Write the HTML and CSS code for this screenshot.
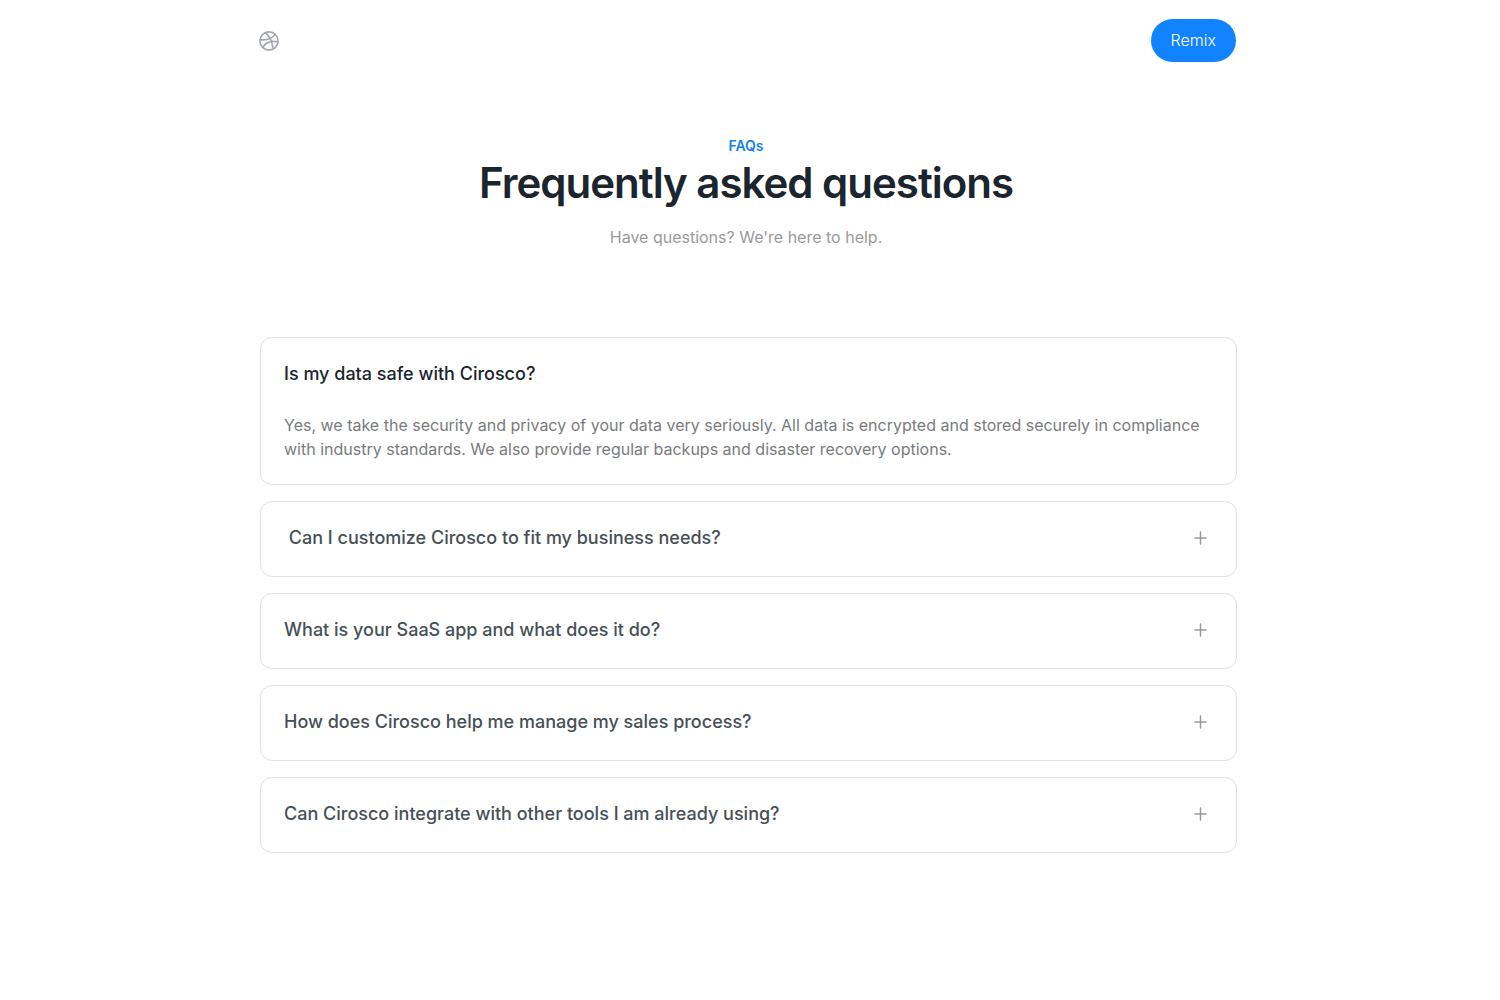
FILE: index.html
```html
<!DOCTYPE html>
<html lang="en">
<head>
<meta charset="utf-8">
<meta name="viewport" content="width=device-width, initial-scale=1">
<title>Frequently asked questions</title>
<link rel="stylesheet" href="styles.css">
</head>
<body>
<div class="page">
  <header class="topbar">
    <a class="logo" href="#" aria-label="Dribbble">
      <svg width="20" height="20" viewBox="0 0 20 20" fill="none" stroke="currentColor" stroke-width="1.6" stroke-linecap="round">
        <circle cx="10" cy="10" r="9.1"/>
        <path d="M6.500 1.700C10.500 5.500 13.500 11 14 18"/>
        <path d="M1 8.700C7.500 9.400 13 8 16.200 3.400"/>
        <path d="M3.700 16.400C6.500 11.500 11.500 9.400 19 10.800"/>
      </svg>
    </a>
    <button class="remix" type="button">Remix</button>
  </header>
  <main>
    <div class="intro">
      <p class="eyebrow">FAQs</p>
      <h1 class="title">Frequently asked questions</h1>
      <p class="subtitle">Have questions? We're here to help.</p>
    </div>
    <section class="faq-list">
      <article class="card">
        <h2 class="question question-open">Is my data safe with Cirosco?</h2>
        <p class="answer">Yes, we take the security and privacy of your data very seriously. All data is encrypted and stored securely in compliance with industry standards. We also provide regular backups and disaster recovery options.</p>
      </article>
      <button class="card card-closed" type="button"><span class="question">&nbsp;Can I customize Cirosco to fit my business needs?</span><svg class="plus" viewBox="0 0 13 14"><path d="M6.500 1v12M1 7h11"/></svg></button>
      <button class="card card-closed" type="button"><span class="question">What is your SaaS app and what does it do?</span><svg class="plus" viewBox="0 0 13 14"><path d="M6.500 1v12M1 7h11"/></svg></button>
      <button class="card card-closed" type="button"><span class="question">How does Cirosco help me manage my sales process?</span><svg class="plus" viewBox="0 0 13 14"><path d="M6.500 1v12M1 7h11"/></svg></button>
      <button class="card card-closed" type="button"><span class="question">Can Cirosco integrate with other tools I am already using?</span><svg class="plus" viewBox="0 0 13 14"><path d="M6.500 1v12M1 7h11"/></svg></button>
    </section>
  </main>
</div>
</body>
</html>
```
FILE: styles.css
```css
* { box-sizing: border-box; }
body { margin: 0; padding-right: 4px; background: #fff; font-family: Inter, "Liberation Sans", sans-serif; font-size: 16px; line-height: 24px; }
h1, h2, p { margin: 0; }
button { font: inherit; cursor: pointer; }
.page { width: 90%; max-width: 978px; margin: 0 auto; padding: 19px 0 40px; }
.topbar { display: flex; align-items: center; justify-content: space-between; padding-right: 1px; }
.logo { display: flex; color: #a3a7ad; }
.remix { height: 43px; padding: 0 20px 2px; border: 0; border-radius: 22px; background: #1283ff; color: #fff; font-weight: 300; }
.intro { padding: 74px 4px 88px 0; text-align: center; }
.eyebrow { color: #1481ee; font-size: 14px; line-height: 20px; font-weight: 600; }
.title { color: #1b252d; font-size: 42px; line-height: 54px; font-weight: 600; letter-spacing: -1px; }
.subtitle { margin-top: 15px; color: #9a9a9a; }
.faq-list { display: grid; gap: 16px; padding-left: 1px; }
.card { width: 100%; padding: 23px; border: 1px solid #dfe1e3; border-radius: 12px; background: #fff; text-align: left; }
.card-closed { display: flex; align-items: center; justify-content: space-between; min-height: 76px; padding: 22px 29px 24px 23px; }
.question { color: #465056; font-size: 18px; line-height: 26px; font-weight: 500; }
.question-open { color: #1b252d; }
.answer { margin-top: 26px; color: #797b7e; }
.plus { width: 13px; height: 14px; flex: none; fill: none; stroke: #999; stroke-width: 1.5; stroke-linecap: round; }
```
